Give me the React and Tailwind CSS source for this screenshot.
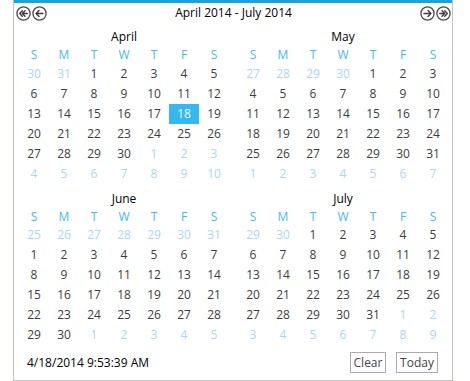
import React from 'react';

const DOW = ['S', 'M', 'T', 'W', 'T', 'F', 'S'];

const buildCells = (year, month) => {
    const first = new Date(year, month, 1);
    const back = first.getDay() || 7;
    const start = new Date(year, month, 1 - back);
    const cells = [];
    for (let i = 0; i < 42; i++) {
        const d = new Date(start.getFullYear(), start.getMonth(), start.getDate() + i);
        cells.push({ day: d.getDate(), inMonth: d.getMonth() === month, selected: d.getMonth() === 3 && d.getDate() === 18 && month === 3 });
    }
    return cells;
};

const NavIcon = ({ dir, double }) => {
    const flip = dir === 'right' ? 'scale(-1,1) translate(-15,0)' : undefined;
    return (
        <svg width="15" height="15" viewBox="0 0 15 15" className="shrink-0">
            <circle cx="7.5" cy="7.5" r="6.6" fill="none" stroke="#4a4a4a" strokeWidth="1.3" />
            <g transform={flip} fill="none" stroke="#3a3a3a" strokeWidth="1.4" strokeLinecap="round" strokeLinejoin="round">
                {double ? (
                    <>
                        <polyline points="6.3,4.8 3.7,7.5 6.3,10.2" />
                        <polyline points="9,4.8 6.4,7.5 9,10.2" />
                        <line x1="6.5" y1="7.5" x2="11.2" y2="7.5" />
                    </>
                ) : (
                    <>
                        <polyline points="7,4.6 4.2,7.5 7,10.4" />
                        <line x1="4.4" y1="7.5" x2="11" y2="7.5" />
                    </>
                )}
            </g>
        </svg>
    );
};

const Month = ({ name, year, month, compact }) => {
    const cells = buildCells(year, month);
    return (
        <div className="w-[210px]">
            <div className="h-[18px] flex items-center justify-center text-black">{name}</div>
            <div className={`grid grid-cols-7 ${compact ? 'h-[17px]' : 'h-[18px]'}`}>
                {DOW.map((d, i) => (
                    <div key={i} className="flex items-center justify-center text-[#45baf0]">{d}</div>
                ))}
            </div>
            <div className="grid grid-cols-7">
                {cells.map((c, i) => (
                    <div
                        key={i}
                        className={`h-[20px] flex items-center justify-center ${
                            c.selected ? 'bg-[#33b8f0] text-white' : c.inMonth ? 'text-[#3c3c3c]' : 'text-[#a9d6f2]'
                        }`}
                    >
                        {c.day}
                    </div>
                ))}
            </div>
        </div>
    );
};

export default function App() {
    return (
        <div className="w-[470px] h-[381px] bg-white text-[12px] leading-none" style={{ fontFamily: '"Open Sans", "Noto Sans", sans-serif' }}>
            <div className="ml-[13px] w-[440px] h-[381px] border-x border-b border-[#c4c4bc] flex flex-col">
                <div className="h-[3px] bg-[#1ba1e2]" />
                <div className="h-[20px] flex items-center pl-[2px] pr-[1px]">
                    <div className="flex gap-[1px]">
                        <NavIcon dir="left" double />
                        <NavIcon dir="left" />
                    </div>
                    <div className="flex-1 text-center text-black">April 2014 - July 2014</div>
                    <div className="flex gap-[1px]">
                        <NavIcon dir="right" />
                        <NavIcon dir="right" double />
                    </div>
                </div>
                <div className="flex gap-[9px] pl-[5px] mt-[5px]">
                    <Month name="April" year={2014} month={3} />
                    <Month name="May" year={2014} month={4} />
                </div>
                <div className="flex gap-[9px] pl-[5px] mt-[6px]">
                    <Month name="June" year={2014} month={5} compact />
                    <Month name="July" year={2014} month={6} compact />
                </div>
                <div className="flex-1 flex items-center pl-[13px] pr-[14px]">
                    <div className="flex-1 text-black">4/18/2014 9:53:39 AM</div>
                    <div className="flex gap-[10px]">
                        <button className="h-[21px] w-[36px] border border-[#ababab] text-[#444] flex items-center justify-center">Clear</button>
                        <button className="h-[21px] w-[42px] border border-[#ababab] text-[#444] flex items-center justify-center">Today</button>
                    </div>
                </div>
            </div>
        </div>
    );
}
